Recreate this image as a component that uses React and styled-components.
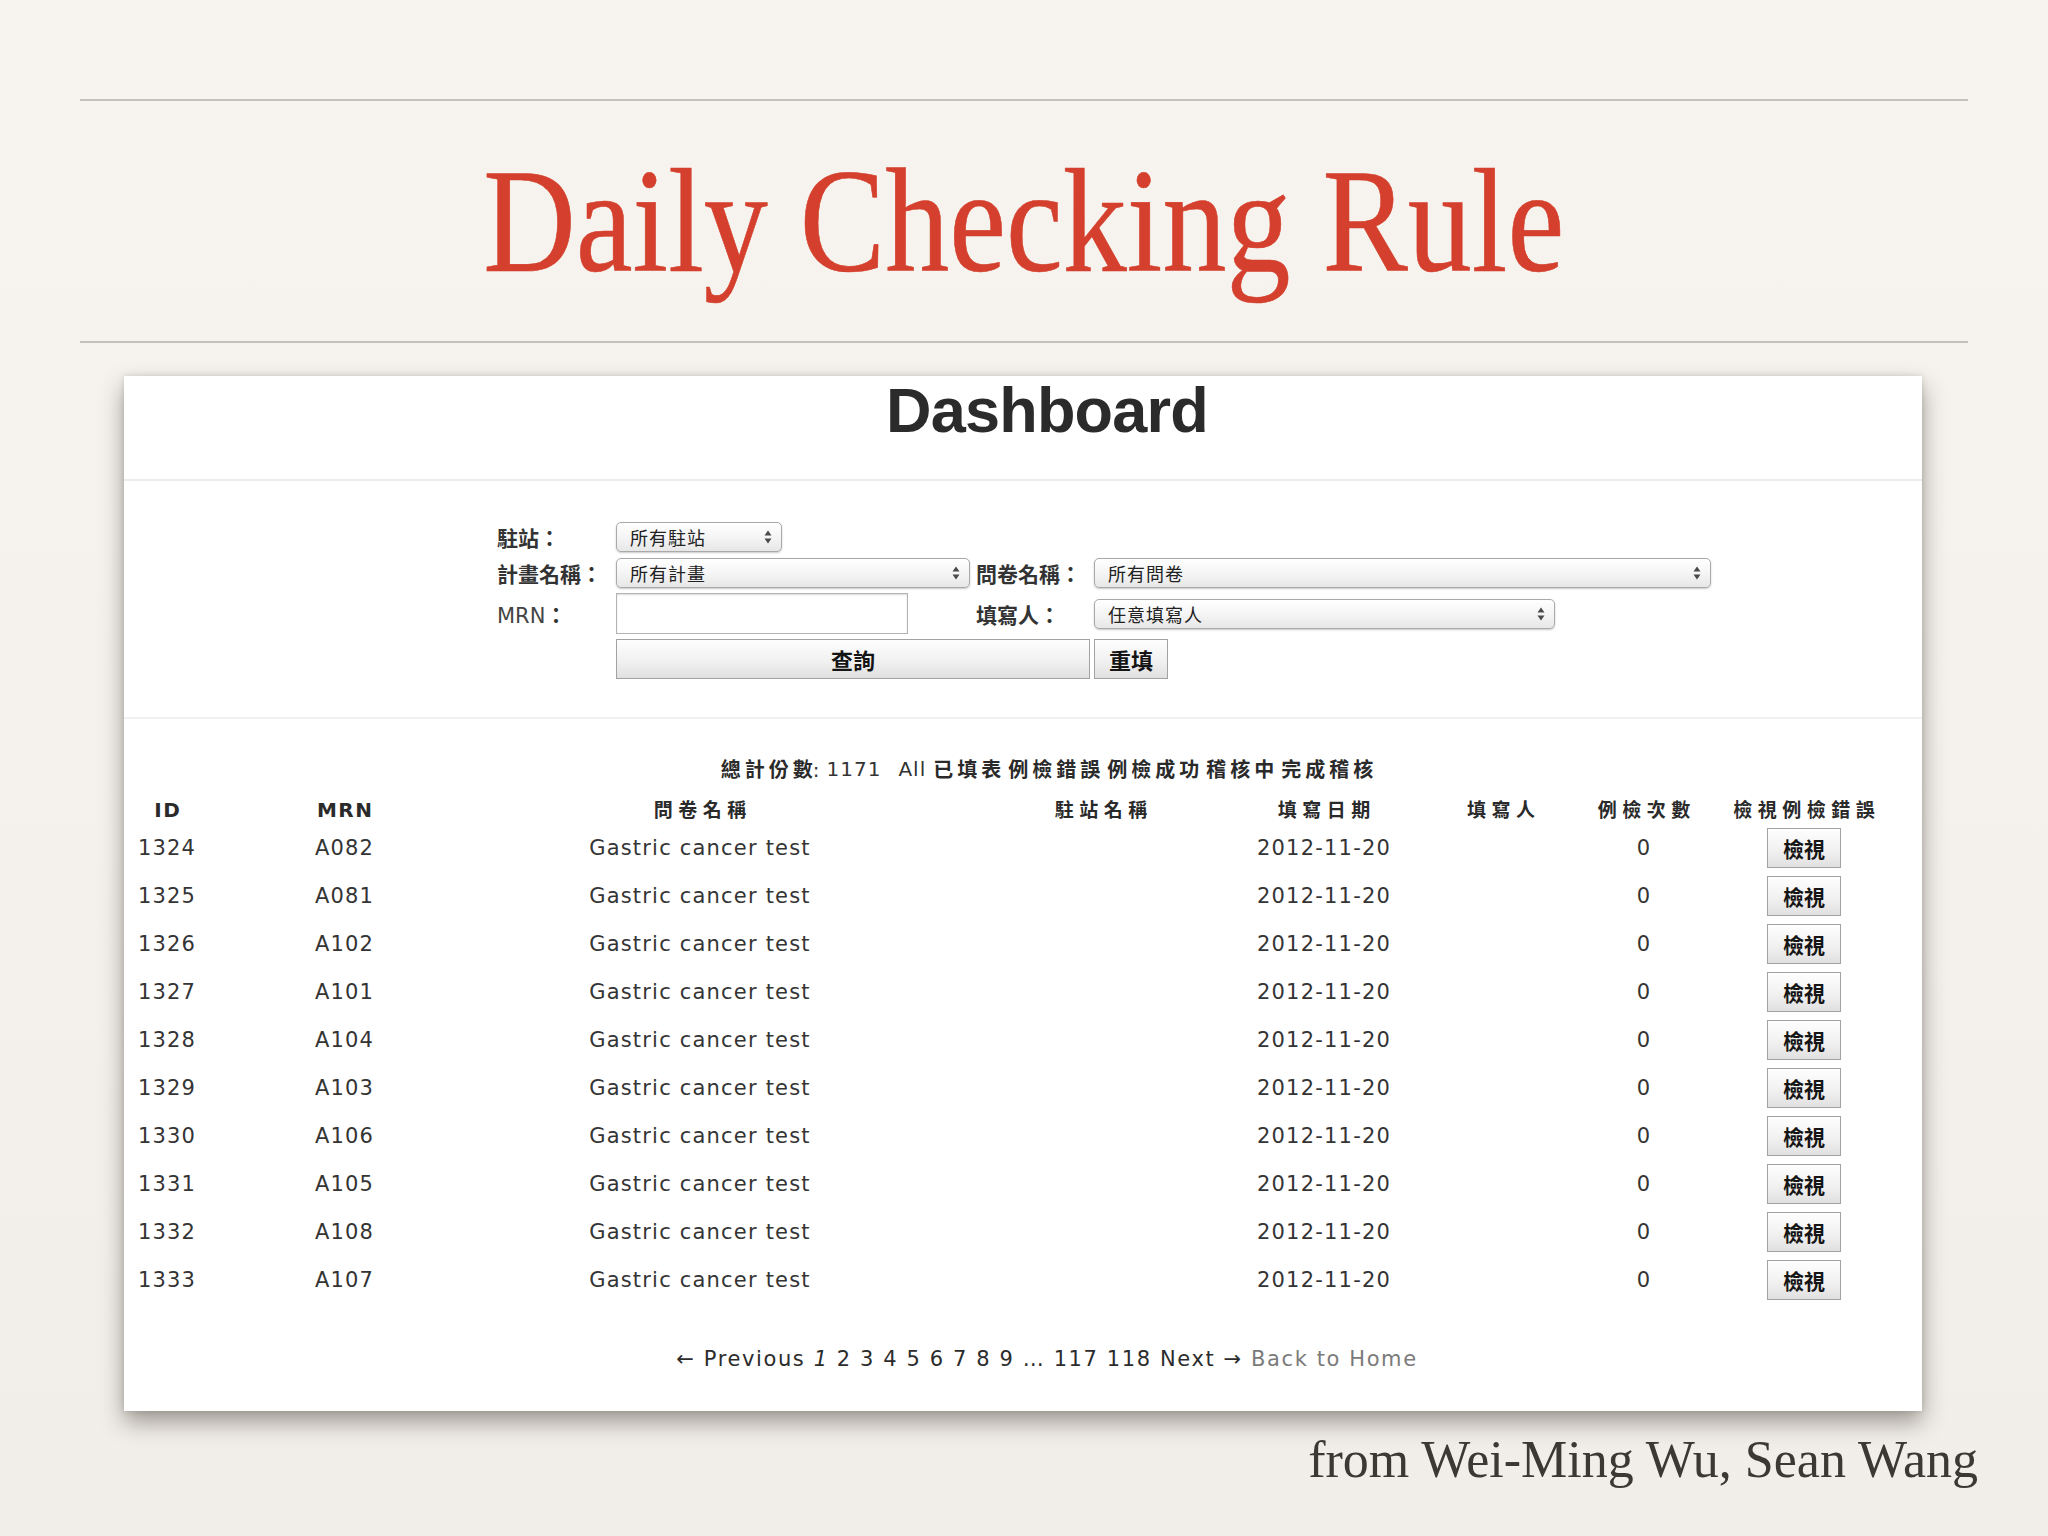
import React from 'react';
import styled, { createGlobalStyle } from 'styled-components';

const GlobalStyle = createGlobalStyle`
  html, body {
    margin: 0;
    padding: 0;
  }
  body {
    background: linear-gradient(180deg, #f7f4f0 0%, #f4f1ec 60%, #f1eee9 100%);
    min-height: 100vh;
  }
`;

const SANS = `"DejaVu Sans", "Noto Sans CJK TC", sans-serif`;
const CJK = `"Noto Sans CJK TC", "DejaVu Sans", sans-serif`;

const Page = styled.div`
  width: 2048px;
  min-height: 1536px;
  padding-top: 99px;
  box-sizing: border-box;
`;

const Rule = styled.hr`
  margin: 0 80px;
  height: 2px;
  border: 0;
  background: #c4c0bc;
`;

const TitleBar = styled.div`
  height: 240px;
  line-height: 240px;
  text-align: center;
  overflow: hidden;
`;

const Title = styled.h1`
  display: inline-block;
  margin: 0;
  font-family: "Liberation Serif", serif;
  font-weight: 400;
  font-size: 148px;
  color: #d4402d;
  transform: scaleX(0.865);
  transform-origin: center;
  -webkit-text-stroke: 0.6px #d4402d;
`;

const Card = styled.section`
  margin: 33px 126px 0 124px;
  background: #fff;
  box-shadow: 0 11px 22px rgba(40, 30, 25, 0.42), 0 0 6px rgba(0, 0, 0, 0.12);
`;

const CardHeader = styled.header`
  height: 100px;
  padding: 3px 0 0 48px;
  border-bottom: 2px solid #ececec;
  text-align: center;
`;

const Heading = styled.h2`
  margin: 0;
  font-family: "Liberation Sans", Arial, sans-serif;
  font-weight: 700;
  font-size: 63px;
  line-height: 63px;
  letter-spacing: -0.8px;
  color: #2b2b2b;
`;

const Filters = styled.div`
  display: grid;
  grid-template-columns: 119px 356px 122px auto;
  grid-template-rows: 31px 31px 41px 40px;
  row-gap: 5px;
  align-items: center;
  padding: 40px 0 38px 373px;
  border-bottom: 2px solid #f1f1f1;
`;

const Label = styled.span`
  font-family: ${CJK};
  font-weight: 700;
  font-size: 21px;
  color: #333;
  padding-left: ${({ $indent }) => ($indent ? '4px' : '0')};
  white-space: nowrap;
`;

const PlainLabel = styled.span`
  font-family: ${SANS};
  font-size: 21px;
  color: #444;
  white-space: nowrap;
`;

const Select = styled.div`
  grid-column: ${({ $col }) => $col};
  width: ${({ $w }) => $w}px;
  height: 30px;
  box-sizing: border-box;
  border: 1px solid #a9a9a9;
  border-radius: 5px;
  background: linear-gradient(180deg, #ffffff 0%, #f5f5f5 50%, #e7e7e7 100%);
  box-shadow: 0 1px 2px rgba(0, 0, 0, 0.22);
  display: flex;
  align-items: center;
  justify-content: space-between;
  padding: 0 9px 0 13px;
  font-family: ${CJK};
  font-size: 18px;
  letter-spacing: 1px;
  color: #222;
`;

const TextInput = styled.div`
  width: 292px;
  height: 41px;
  box-sizing: border-box;
  border: 1px solid #b3b3b3;
  background: #fff;
  box-shadow: inset 0 1px 2px rgba(0, 0, 0, 0.14);
`;

const Button = styled.button`
  grid-column: ${({ $col }) => $col || 'auto'};
  width: ${({ $w }) => $w}px;
  height: ${({ $h }) => $h || 40}px;
  box-sizing: border-box;
  border: 1px solid #a2a2a2;
  border-radius: 0;
  background: linear-gradient(180deg, #fefefe 0%, #f1f1f1 55%, #e0e0e0 100%);
  font-family: ${CJK};
  font-weight: 700;
  font-size: ${({ $fs }) => $fs || 22}px;
  color: #151515;
  padding: 0;
  cursor: pointer;
`;

const Updown = () => (
  <svg width="8" height="14" viewBox="0 0 8 14">
    <polygon points="0.5,5.5 4,0.5 7.5,5.5" fill="#4a4a4a" />
    <polygon points="0.5,8.5 4,13.5 7.5,8.5" fill="#4a4a4a" />
  </svg>
);

const Summary = styled.div`
  margin-top: 33px;
  height: 34px;
  line-height: 34px;
  padding-left: 48px;
  display: flex;
  justify-content: center;
  align-items: center;
  gap: 7px;
  font-family: ${SANS};
  font-size: 20px;
  color: #333;
  white-space: nowrap;
`;

const Strong = styled.span`
  font-family: ${CJK};
  font-weight: 700;
  font-size: 20px;
  letter-spacing: 4px;
  color: #2a2a2a;
  margin-right: ${({ $tight }) => ($tight ? '-4px' : '0')};
`;

const Num = styled.span`
  letter-spacing: 1px;
  margin-right: ${({ $space }) => $space || 0}px;
`;

const Table = styled.div`
  margin-left: -16px;
  width: ${({ $width }) => $width}px;
`;

const HeadRow = styled.div`
  display: grid;
  grid-template-columns: ${({ $cols }) => $cols};
  height: 38px;
  align-items: end;
`;

const Row = styled.div`
  display: grid;
  grid-template-columns: ${({ $cols }) => $cols};
  height: 48px;
  align-items: center;
`;

const Cell = styled.div`
  min-width: 0;
  display: flex;
  justify-content: center;
  white-space: nowrap;
  font-family: ${SANS};
  font-size: 21px;
  letter-spacing: 1.2px;
  color: #343434;
`;

const HeadCell = styled(Cell)`
  height: 28px;
  line-height: 28px;
  font-weight: 700;
  color: #2a2a2a;
  font-size: ${({ $cjk }) => ($cjk ? '19px' : '20px')};
  letter-spacing: ${({ $cjk }) => ($cjk ? '5.5px' : '1.5px')};
  padding-left: ${({ $cjk }) => ($cjk ? '5.5px' : '1.5px')};
`;

const Pager = styled.nav`
  margin-top: 40px;
  padding: 0 0 37px 48px;
  line-height: 30px;
  text-align: center;
  font-family: ${SANS};
  font-size: 21px;
  letter-spacing: 1.6px;
  color: #2c2c2c;
  white-space: nowrap;
`;

const PagerLink = styled.span`
  color: ${({ $muted }) => ($muted ? '#7b7b7b' : 'inherit')};
  font-style: ${({ $current }) => ($current ? 'italic' : 'normal')};
`;

const Credit = styled.p`
  margin: 19px 0 0;
  padding-right: 70px;
  line-height: 60px;
  text-align: right;
  font-family: "Liberation Serif", serif;
  font-size: 52px;
  color: #3b3835;
`;

const columns = [
  { key: 'id', label: 'ID', w: 118 },
  { key: 'mrn', label: 'MRN', w: 237 },
  { key: 'form', label: '問卷名稱', w: 474, cjk: true },
  { key: 'station', label: '駐站名稱', w: 328, cjk: true },
  { key: 'date', label: '填寫日期', w: 118, cjk: true },
  { key: 'writer', label: '填寫人', w: 236, cjk: true },
  { key: 'count', label: '例檢次數', w: 50, cjk: true },
  { key: 'view', label: '檢視例檢錯誤', w: 270, cjk: true },
];

const gridCols = columns.map((c) => `${c.w}px`).join(' ');
const tableWidth = columns.reduce((s, c) => s + c.w, 0);

const mrns = ['A082', 'A081', 'A102', 'A101', 'A104', 'A103', 'A106', 'A105', 'A108', 'A107'];
const rows = mrns.map((mrn, i) => ({
  id: 1324 + i,
  mrn,
  form: 'Gastric cancer test',
  station: '',
  date: '2012-11-20',
  writer: '',
  count: 0,
}));

const statusLinks = ['已填表', '例檢錯誤', '例檢成功', '稽核中', '完成稽核'];

export default function App() {
  return (
    <>
      <GlobalStyle />
      <Page>
        <Rule />
        <TitleBar>
          <Title>Daily Checking Rule</Title>
        </TitleBar>
        <Rule />

        <Card>
          <CardHeader>
            <Heading>Dashboard</Heading>
          </CardHeader>

          <Filters>
            <Label>駐站：</Label>
            <Select $col="2" $w={166}>
              所有駐站
              <Updown />
            </Select>

            <Label style={{ gridColumn: 1 }}>計畫名稱：</Label>
            <Select $col="2" $w={354}>
              所有計畫
              <Updown />
            </Select>
            <Label $indent>問卷名稱：</Label>
            <Select $col="4" $w={617}>
              所有問卷
              <Updown />
            </Select>

            <PlainLabel>
              MRN<Label as="span">：</Label>
            </PlainLabel>
            <TextInput />
            <Label $indent>填寫人：</Label>
            <Select $col="4" $w={461}>
              任意填寫人
              <Updown />
            </Select>

            <Button $col="2 / 4" $w={474}>查詢</Button>
            <Button $col="4" $w={74}>重填</Button>
          </Filters>

          <Summary>
            <span>
              <Strong $tight>總計份數</Strong>:
            </span>
            <Num $space={10}>1171</Num>
            <Num>All</Num>
            {statusLinks.map((s) => (
              <Strong key={s} $tight>
                {s}
              </Strong>
            ))}
          </Summary>

          <Table $width={tableWidth}>
            <HeadRow $cols={gridCols}>
              {columns.map((c) => (
                <HeadCell key={c.key} $cjk={c.cjk}>
                  {c.label}
                </HeadCell>
              ))}
            </HeadRow>
            {rows.map((r) => (
              <Row key={r.id} $cols={gridCols}>
                <Cell>{r.id}</Cell>
                <Cell>{r.mrn}</Cell>
                <Cell>{r.form}</Cell>
                <Cell>{r.station}</Cell>
                <Cell>{r.date}</Cell>
                <Cell>{r.writer}</Cell>
                <Cell>{r.count}</Cell>
                <Cell>
                  <Button $w={74} $fs={21}>檢視</Button>
                </Cell>
              </Row>
            ))}
          </Table>

          <Pager>
            ← Previous <PagerLink $current>1</PagerLink> 2 3 4 5 6 7 8 9 … 117 118 Next →{' '}
            <PagerLink $muted>Back to Home</PagerLink>
          </Pager>
        </Card>

        <Credit>from Wei-Ming Wu, Sean Wang</Credit>
      </Page>
    </>
  );
}
